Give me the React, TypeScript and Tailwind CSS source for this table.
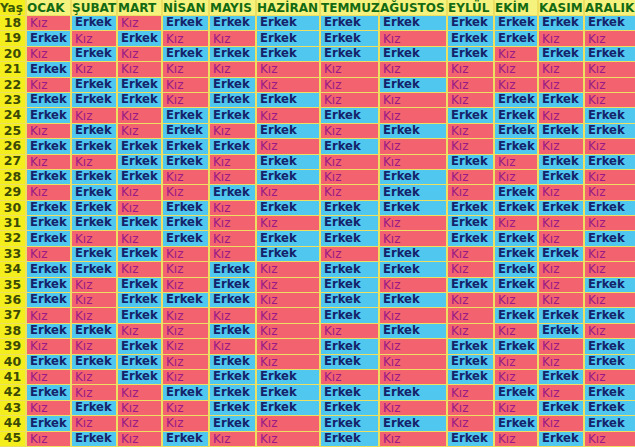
const months = ['OCAK', 'ŞUBAT', 'MART', 'NİSAN', 'MAYIS', 'HAZİRAN', 'TEMMUZ', 'AĞUSTOS', 'EYLÜL', 'EKİM', 'KASIM', 'ARALIK']

// K = Kız, E = Erkek, one letter per month
const chart: [number, string][] = [
  [18, 'KEKEEEEEEEEE'],
  [19, 'EKEKKEEKEEKK'],
  [20, 'KEKEEEEEEKEE'],
  [21, 'EKKKKKKKKKKK'],
  [22, 'KEEKEKKEKKKK'],
  [23, 'EEEKEEKKKEEK'],
  [24, 'EKKEEKEKEEKE'],
  [25, 'KEKEKEKEKEEE'],
  [26, 'EEEEEKEKKEKK'],
  [27, 'KKEEKEKKEKEE'],
  [28, 'EEEKKEKEKKEK'],
  [29, 'KEKKEKKEKEKK'],
  [30, 'EEKEKEEEEEEE'],
  [31, 'EEEEKKEKEKKK'],
  [32, 'EKKEKEEKEEKE'],
  [33, 'KEEKKEKEKEEK'],
  [34, 'EEKKEKEEKEKK'],
  [35, 'EKEKEKEKEEKE'],
  [36, 'EKEEEKEEKKKK'],
  [37, 'KKEKKKEKKEEE'],
  [38, 'EEKKEKKEKKEK'],
  [39, 'KKEKKKEKEEKE'],
  [40, 'EEEKEKEKEKKE'],
  [41, 'KKEKEEKKEKEK'],
  [42, 'EKKEEEEEKEKE'],
  [43, 'KEKKEEEKKKEE'],
  [44, 'EKKKEKEEKEKE'],
  [45, 'KEKEKKEKEKEK'],
]

function Cell({ value }: { value: string }) {
  const boy = value === 'E'
  return (
    <div
      className={
        boy
          ? 'bg-[#4fc7ee] text-[#15236b] font-bold text-[11.6px] pl-[3px] flex items-center overflow-hidden whitespace-nowrap'
          : 'bg-[#f2636f] text-[#9a1a86] text-[12px] pl-[3px] flex items-center overflow-hidden whitespace-nowrap'
      }
    >
      {boy ? 'Erkek' : 'Kız'}
    </div>
  )
}

export default function App() {
  return (
    <div
      className="w-[635px] h-[447px] overflow-hidden bg-[#ecdf62] grid gap-x-[2px] gap-y-[1px] leading-none"
      style={{
        fontFamily: '"DejaVu Sans", Verdana, sans-serif',
        gridTemplateColumns: '25px 43px 44px 43px 45px 45px 62px 57px 66px 45px 42px 44px 50px',
        gridTemplateRows: '15px repeat(28, 14.4px)',
      }}
    >
      <div className="bg-[#f3ee1c] text-[#3a5a08] font-bold text-[12px] flex items-center">Yaş</div>
      {months.map((m) => (
        <div
          key={m}
          className="bg-[#f6f27e] text-[#136a12] font-bold text-[12px] flex items-center whitespace-nowrap"
        >
          {m}
        </div>
      ))}
      {chart.map(([age, row]) => (
        <div key={age} className="contents">
          <div className="bg-[#f3ee1c] text-[#3d4a06] font-bold text-[12.5px] flex items-center justify-center">
            {age}
          </div>
          {row.split('').map((v, i) => (
            <Cell key={i} value={v} />
          ))}
        </div>
      ))}
    </div>
  )
}
